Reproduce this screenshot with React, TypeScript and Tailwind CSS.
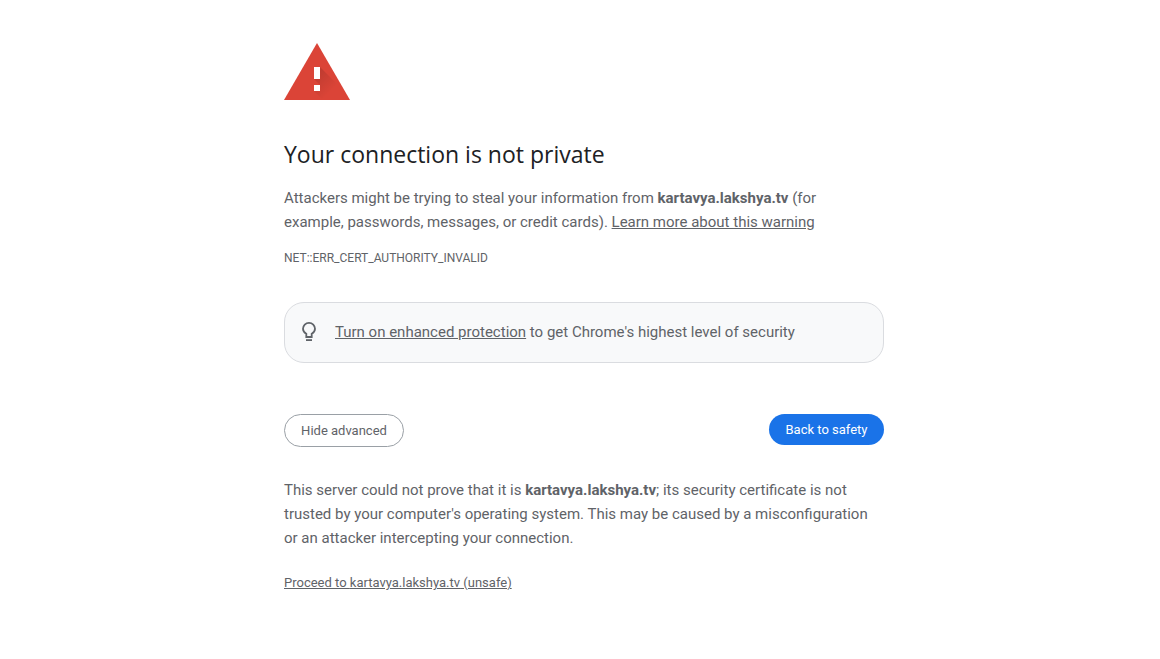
const HOST = 'kartavya.lakshya.tv';

function WarningIcon() {
  return (
    <svg width="66" height="57" viewBox="0 0 66 57" role="img" aria-label="Warning">
      <defs>
        <linearGradient id="long-shadow" x1="33" y1="32" x2="50" y2="49" gradientUnits="userSpaceOnUse">
          <stop offset="0" stopColor="#000" stopOpacity="0.12" />
          <stop offset="0.9" stopColor="#000" stopOpacity="0" />
        </linearGradient>
      </defs>
      <path d="M33 0 66 57H0Z" fill="#db4437" />
      <path d="M36 24 56.500 44.500 62 57H39L30 48V42H36L30 36Z" fill="url(#long-shadow)" />
      <path d="M30 24h6v12h-6zM30 42h6v6h-6z" fill="#fff" />
    </svg>
  );
}

function BulbIcon() {
  return (
    <svg width="24" height="24" viewBox="0 0 24 24" aria-hidden="true">
      <path
        d="M9.300 17v-3.200C7.500 12.800 6 11 6 8.800a6 6 0 0 1 12 0c0 2.200-1.500 4-3.300 5V17Z"
        fill="none"
        stroke="#5f6368"
        strokeWidth="1.8"
      />
      <path d="M9 19.200h6V21H9z" fill="#5f6368" />
    </svg>
  );
}

export default function App() {
  return (
    <div className="min-h-screen bg-white pl-2 font-['Roboto',sans-serif] text-[15px] leading-6 text-[#5f6368]">
      <main className="mx-auto flex max-w-[600px] flex-col items-start pt-[43px] pb-12">
        <WarningIcon />
        <h1 className="mt-[39px] font-['Open_Sans',sans-serif] text-[23px] leading-[30px] text-[#202124]">
          Your connection is not private
        </h1>
        <p className="mt-[17px] pr-4">
          Attackers might be trying to steal your information from <strong>{HOST}</strong> (for example, passwords,
          messages, or credit cards).{' '}
          <a href="#learn-more" className="underline">
            Learn more about this warning
          </a>
        </p>
        <p className="mt-4 text-xs leading-4">NET::ERR_CERT_AUTHORITY_INVALID</p>

        <div className="mt-9 flex w-full items-center gap-3.5 rounded-[20px] border border-[#dadce0] bg-[#f8f9fa] px-3 pt-[17px] pb-[18px]">
          <BulbIcon />
          <p>
            <a href="#enhanced-protection" className="underline">
              Turn on enhanced protection
            </a>{' '}
            to get Chrome's highest level of security
          </p>
        </div>

        <div className="mt-[51px] flex w-full items-start justify-between text-[13px]">
          <button type="button" className="h-[33px] min-w-[120px] rounded-full border border-[#9aa0a6] px-3.5">
            Hide advanced
          </button>
          <button type="button" className="h-[31px] min-w-[115px] rounded-full bg-[#1a73e8] px-3.5 text-white">
            Back to safety
          </button>
        </div>

        <p className="mt-[31px]">
          This server could not prove that it is <strong>{HOST}</strong>; its security certificate is not trusted by
          your computer's operating system. This may be caused by a misconfiguration or an attacker intercepting your
          connection.
        </p>
        <a href="#proceed" className="mt-[21px] text-[13px] underline">
          Proceed to {HOST} (unsafe)
        </a>
      </main>
    </div>
  );
}
